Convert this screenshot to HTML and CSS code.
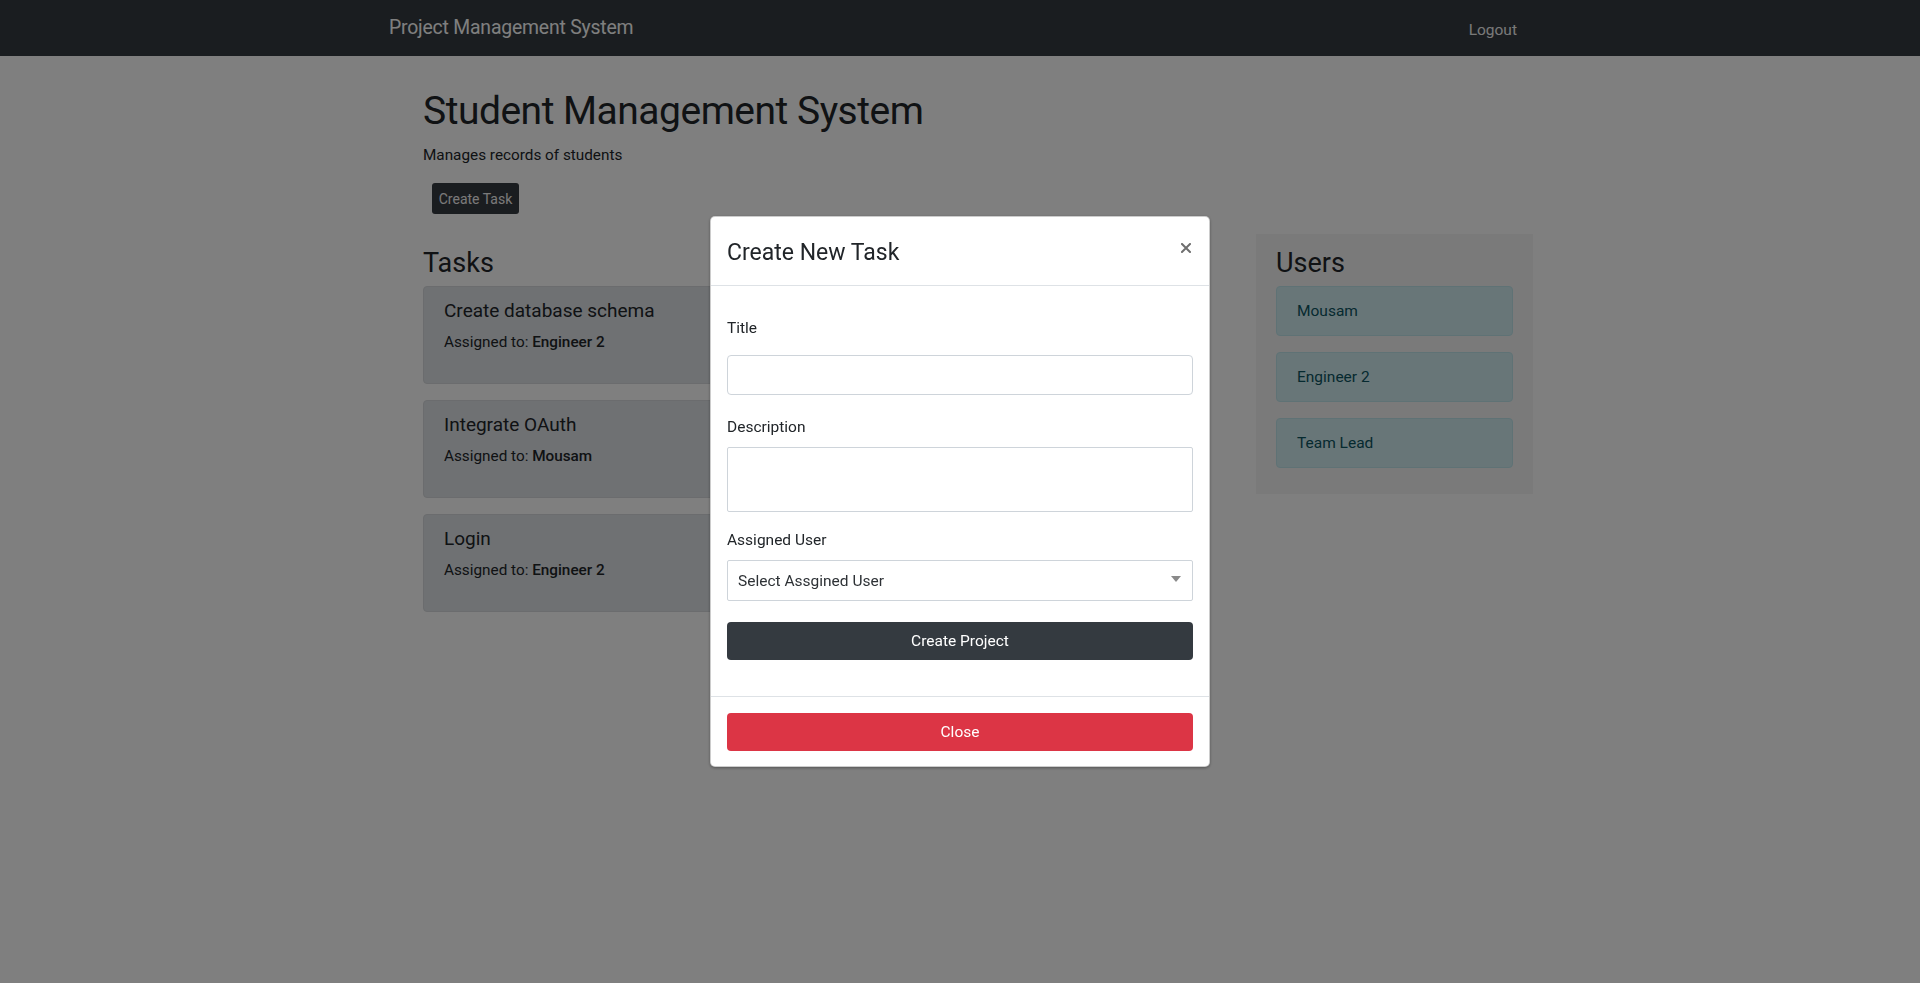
FILE: index.html
```html
<!DOCTYPE html>
<html lang="en">
<head>
<meta charset="utf-8">
<title>Project Management System</title>
<link rel="stylesheet" href="styles.css">
</head>
<body>
<nav class="navbar">
  <div class="nav-inner">
    <span class="brand">Project Management System</span>
    <a class="nav-link" href="#">Logout</a>
  </div>
</nav>

<main class="page">
  <h1 class="page-title">Student Management System</h1>
  <p class="page-sub">Manages records of students</p>
  <div class="actions"><button class="btn-create" type="button">Create Task</button></div>

  <div class="row">
    <section class="tasks">
      <h3 class="section-title">Tasks</h3>
      <div class="task-card">
        <h5 class="task-title">Create database schema</h5>
        <p class="task-meta">Assigned to: <b>Engineer 2</b></p>
      </div>
      <div class="task-card">
        <h5 class="task-title">Integrate OAuth</h5>
        <p class="task-meta">Assigned to: <b>Mousam</b></p>
      </div>
      <div class="task-card">
        <h5 class="task-title">Login</h5>
        <p class="task-meta">Assigned to: <b>Engineer 2</b></p>
      </div>
    </section>

    <aside class="users">
      <h3 class="section-title">Users</h3>
      <div class="user-item">Mousam</div>
      <div class="user-item">Engineer 2</div>
      <div class="user-item">Team Lead</div>
    </aside>
  </div>
</main>

<div class="backdrop"></div>

<div class="modal-wrap">
  <div class="modal">
    <div class="modal-header">
      <h4 class="modal-title">Create New Task</h4>
      <button class="close" type="button" aria-label="Close">
        <svg width="10" height="10" viewBox="0 0 10 10"><path d="M1 1 L9 9 M9 1 L1 9" stroke="#6f6f6f" stroke-width="2" stroke-linecap="square" fill="none"/></svg>
      </button>
    </div>
    <div class="modal-body">
      <form class="form">
        <div class="group g-title">
          <label class="label">Title</label>
          <input class="control input" type="text">
        </div>
        <div class="group g-desc">
          <label class="label">Description</label>
          <textarea class="control textarea"></textarea>
        </div>
        <div class="group g-user">
          <label class="label">Assigned User</label>
          <div class="select-wrap">
            <select class="control select">
              <option>Select Assgined User</option>
            </select>
            <span class="caret"></span>
          </div>
        </div>
        <button class="btn btn-dark" type="button">Create Project</button>
      </form>
    </div>
    <div class="modal-footer">
      <button class="btn btn-danger" type="button">Close</button>
    </div>
  </div>
</div>
</body>
</html>
```
FILE: styles.css
```css
* { box-sizing: border-box; }

html, body {
  margin: 0;
  padding: 0;
}

body {
  font-family: Roboto, "Noto Sans", sans-serif;
  font-size: 16px;
  line-height: 24px;
  color: #212529;
  background: #ffffff;
  min-height: 983px;
}

/* NAVBAR */
.navbar {
  height: 56px;
  background: #343a40;
  display: flex;
  align-items: center;
}
.nav-inner {
  margin-left: calc(50% - 571px);
  width: 1128px;
  display: flex;
  align-items: center;
  justify-content: space-between;
}
.brand {
  font-size: 19.4px;
  line-height: 30px;
  color: #ffffff;
  letter-spacing: -0.2px;
}
.nav-link {
  font-size: 15.5px;
  color: #f2f2f2;
  text-decoration: none;
  margin-top: 3px;
}

/* PAGE */
.page {
  margin-left: calc(50% - 537px);
  width: 1110px;
  padding-top: 31px;
}
.page-title {
  margin: 0 0 8px;
  font-size: 39px;
  line-height: 48px;
  font-weight: 400;
  letter-spacing: -0.5px;
}
.page-sub {
  margin: 0 0 16px;
  font-size: 15.3px;
  line-height: 24px;
}
.actions {
  padding-left: 9px;
}
.btn-create {
  width: 87px;
  height: 31px;
  border: none;
  border-radius: 3px;
  background: #343a40;
  color: #f4f4f4;
  font-family: inherit;
  font-size: 14px;
  padding: 0;
}

.row {
  display: flex;
  align-items: flex-start;
  margin-top: 20px;
}
.tasks {
  width: 777px;
  padding-top: 12px;
}
.section-title {
  margin: 0 0 6px;
  font-size: 27px;
  line-height: 34px;
  font-weight: 400;
}
.task-card {
  background: #dee2e6;
  border: 1px solid #d6d9dc;
  border-radius: 4px;
  padding: 12px 20px 13px;
  margin-bottom: 16px;
}
.task-title {
  margin: 0 0 7px;
  font-size: 19px;
  line-height: 24px;
  font-weight: 400;
}
.task-meta {
  margin: 0 0 16px;
  font-size: 15.3px;
  line-height: 24px;
}
.task-meta b { font-weight: 500; }

.users {
  margin-left: auto;
  width: 277px;
  background: #f4f4f4;
  padding: 12px 20px 10px;
}
.user-item {
  background: #d1ecf1;
  border: 1px solid #bee5eb;
  color: #0c5460;
  border-radius: 4px;
  padding: 12px 20px;
  line-height: 24px;
  font-size: 15.5px;
  margin-bottom: 16px;
}

/* BACKDROP + MODAL */
.backdrop {
  position: fixed;
  inset: 0;
  background: rgba(0, 0, 0, 0.5);
}
.modal-wrap {
  position: fixed;
  inset: 0;
  padding-top: 216px;
}
.modal {
  width: 500px;
  margin: 0 auto;
  background: #ffffff;
  border: 1px solid rgba(0, 0, 0, 0.2);
  border-radius: 5px;
  box-shadow: 0 1px 3px rgba(0, 0, 0, 0.35);
}
.modal-header {
  display: flex;
  justify-content: space-between;
  align-items: flex-start;
  padding: 16px;
  border-bottom: 1px solid #dee2e6;
}
.modal-title {
  margin: 0;
  padding-top: 2px;
  height: 36px;
  font-size: 23px;
  line-height: 36px;
  font-weight: 400;
}
.close {
  border: none;
  background: none;
  padding: 0;
  margin: 10px 2px 0 0;
  width: 10px;
  height: 10px;
  display: flex;
}
.modal-body {
  padding: 16px;
}
.form {
  padding-top: 14px;
  padding-bottom: 20px;
}
.group {
  display: flex;
  flex-direction: column;
}
.label {
  font-size: 15.5px;
  line-height: 24px;
  color: #212529;
}
.g-title { margin-bottom: 20px; }
.g-title .label { margin-bottom: 15px; }
.g-desc { margin-bottom: 16px; }
.g-desc .label { margin-bottom: 8px; }
.g-user { margin-bottom: 21px; }
.g-user .label { margin-bottom: 8px; }

.control {
  display: block;
  width: 100%;
  border: 1px solid #ced4da;
  background: #ffffff;
  font-family: inherit;
  font-size: 15.5px;
  color: #495057;
  margin: 0;
}
.input {
  height: 40px;
  border-radius: 4px;
  padding: 6px 12px;
}
.textarea {
  height: 65px;
  border-radius: 2px;
  resize: none;
  padding: 6px 12px;
}
.select-wrap {
  position: relative;
}
.select {
  height: 41px;
  border-radius: 2px;
  padding: 0 10px;
  appearance: none;
  -webkit-appearance: none;
  color: #2e3236;
}
.caret {
  position: absolute;
  right: 12px;
  top: 16px;
  width: 0;
  height: 0;
  border-left: 5px solid transparent;
  border-right: 5px solid transparent;
  border-top: 6px solid #8a8a8a;
}

.btn {
  display: block;
  width: 100%;
  height: 38px;
  border: none;
  border-radius: 4px;
  font-family: inherit;
  font-size: 15.5px;
  color: #ffffff;
  padding: 0;
}
.btn-dark { background: #343a40; }
.btn-danger { background: #dc3545; }

.modal-footer {
  border-top: 1px solid #dee2e6;
  padding: 16px 16px 15px;
}
```
